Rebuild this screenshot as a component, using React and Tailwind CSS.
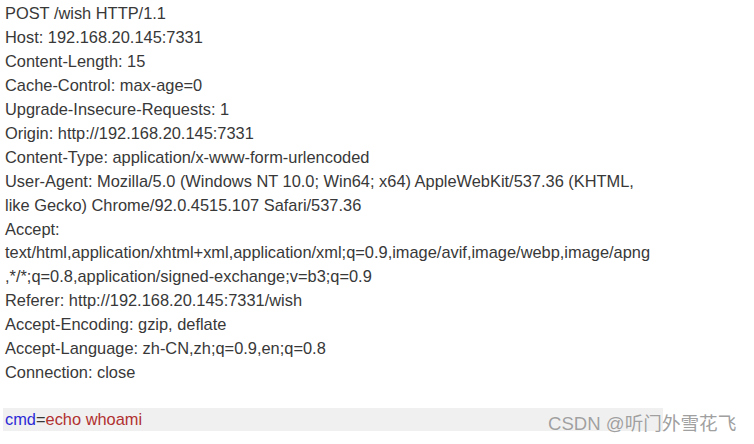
import React from 'react';

const lines = [
  'POST /wish HTTP/1.1',
  'Host: 192.168.20.145:7331',
  'Content-Length: 15',
  'Cache-Control: max-age=0',
  'Upgrade-Insecure-Requests: 1',
  'Origin: http://192.168.20.145:7331',
  'Content-Type: application/x-www-form-urlencoded',
  'User-Agent: Mozilla/5.0 (Windows NT 10.0; Win64; x64) AppleWebKit/537.36 (KHTML,',
  'like Gecko) Chrome/92.0.4515.107 Safari/537.36',
  'Accept:',
  'text/html,application/xhtml+xml,application/xml;q=0.9,image/avif,image/webp,image/apng',
  ',*/*;q=0.8,application/signed-exchange;v=b3;q=0.9',
  'Referer: http://192.168.20.145:7331/wish',
  'Accept-Encoding: gzip, deflate',
  'Accept-Language: zh-CN,zh;q=0.9,en;q=0.8',
  'Connection: close',
];

export default function App() {
  return (
    <div className="relative w-[754px] h-[444px] bg-white overflow-hidden font-['Liberation_Sans',sans-serif] text-[16.4px] leading-[23.9px] text-[#383838]">
      <div className="pt-[2.4px] pl-[5px]">
        {lines.map((l, i) => (
          <div key={i} className="whitespace-pre">{l}</div>
        ))}
      </div>
      <div className="ml-[3px] mt-[23.2px] w-[660px] h-[23px] leading-[21px] bg-[#f0f0f0] pl-[2px] flex items-center">
        <span className="text-[#2b2bd6]">cmd</span>
        <span className="text-[#383838]">=</span>
        <span className="text-[#b03030]">echo whoami</span>
      </div>
      <div className="absolute left-[548px] top-[413px] text-[18.6px] leading-[22px] text-[#a0a0a0] font-['Liberation_Sans','Noto_Sans_CJK_SC',sans-serif] [text-shadow:0_0_1px_#fff]">
        CSDN @听门外雪花飞
      </div>
    </div>
  );
}
